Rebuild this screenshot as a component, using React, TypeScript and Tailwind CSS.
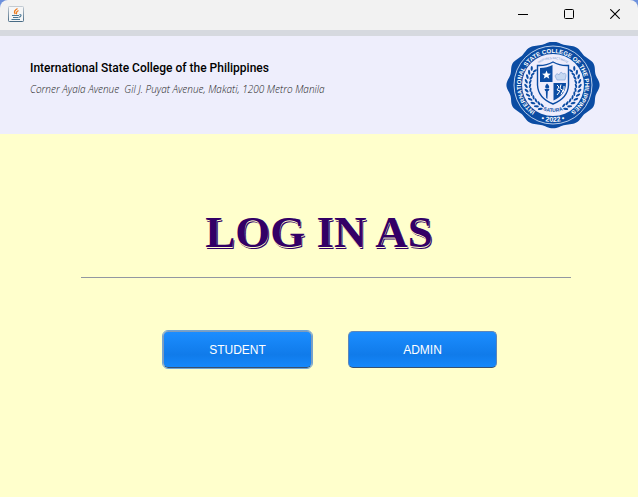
import React from "react";

const CX = 47;
const CY = 43;

function scallop(): string {
  const points: string[] = [];
  for (let i = 0; i < 360; i += 2) {
    const a = (i * Math.PI) / 180;
    const bump = (1 + Math.cos(12 * a)) / 2;
    const rx = 44 + 2.6 * bump;
    const ry = 41.5 + 1.8 * bump;
    points.push(`${(CX + rx * Math.cos(a)).toFixed(2)},${(CY + ry * Math.sin(a)).toFixed(2)}`);
  }
  return points.join(" ");
}

const leaves = Array.from({ length: 11 }, (_, i) => 118 + i * 10);

function Laurel() {
  return (
    <g fill="#0b4ca3">
      {leaves.map((deg) => (
        <g key={deg} transform={`rotate(${deg} ${CX} ${CY})`}>
          <ellipse cx={CX + 27} cy={CY} rx="2.5" ry="1.1" transform={`rotate(55 ${CX + 27} ${CY})`} />
          <ellipse cx={CX + 23} cy={CY} rx="2.3" ry="1" transform={`rotate(110 ${CX + 23} ${CY})`} />
        </g>
      ))}
    </g>
  );
}

function Seal() {
  return (
    <svg
      className="h-[88px] w-[94px] shrink-0"
      viewBox="0 0 94 88"
      role="img"
      aria-label="College seal"
      style={{ fontFamily: '"Liberation Sans", Arial, sans-serif' }}
    >
      <defs>
        <path id="ring" d="M47 75 A32 32 0 1 1 47.01 75" />
        <path id="year" d="M10 43 A37 37 0 0 0 84 43" />
        <path id="innerTop" d="M21 43 A26 26 0 0 1 73 43" />
        <path id="innerBottom" d="M20 43 A27 27 0 0 0 74 43" />
      </defs>
      <polygon points={scallop()} fill="#0b4ca3" />
      <circle cx={CX} cy={CY} r="39" fill="none" stroke="#e4edfb" strokeWidth="0.8" />
      <circle cx={CX} cy={CY} r="31" fill="#eeedfc" />
      <text fill="#ffffff" fontSize="6" fontWeight="700">
        <textPath href="#ring" startOffset="50%" textAnchor="middle">
          INTERNATIONAL STATE COLLEGE OF THE PHILIPPINES
        </textPath>
      </text>
      <text fill="#ffffff" fontSize="7" fontWeight="700">
        <textPath href="#year" startOffset="50%" textAnchor="middle">
          • 2022 •
        </textPath>
      </text>
      <text fill="#6f93ca" fontSize="3">
        <textPath href="#innerTop" startOffset="50%" textAnchor="middle">
          INSPIRES FACTMATE
        </textPath>
      </text>
      <text fill="#0b4ca3" fontSize="5" fontWeight="700">
        <textPath href="#innerBottom" startOffset="50%" textAnchor="middle">
          SATURA
        </textPath>
      </text>
      <Laurel />
      <g transform="translate(94 0) scale(-1 1)">
        <Laurel />
      </g>
      <path d="M47 20 Q40 24 31.500 23.500 V43 Q32 56 47 62 Q62 56 62.500 43 V23.500 Q54 24 47 20Z" fill="#eeedfc" stroke="#0b4ca3" strokeWidth="1.400" />
      <path d="M46.500 23 Q41 26 34 26 V40 H46.500Z" fill="#0b4ca3" />
      <path d="M47.500 41 H60 Q60 53 47.500 58.500Z" fill="#0b4ca3" />
      <path d="M40.500 28.500 l1.200 3 3.200 .2 -2.500 2 .9 3.100 -2.800 -1.700 -2.800 1.700 .9 -3.100 -2.500 -2 3.200 -.2Z" fill="#ffffff" />
      <path d="M49 34 q2 -4 4 -1 q2 -5 4 -1 q3 -2 3 2 l-1 4 h-8Z" fill="#c6d7f1" stroke="#7da0d5" strokeWidth="0.600" />
      <path d="M41 41.500 q-3 3 -1 5 h2.500 q2 -2 -1.500 -5Z M38.500 47 h5 l-1 2 h-.7 l-.4 8 -1.200 -1 -.4 -7 h-.6Z" fill="#0b4ca3" />
      <path d="M51 43 l2 2 -2 3 3 1 -3 4 M55 42.500 l-1 4 3 2 -2 4 M58 44 v3 l-1 3" fill="none" stroke="#ffffff" strokeWidth="1" />
    </svg>
  );
}

function JavaIcon() {
  return (
    <svg className="size-4" viewBox="0 0 16 16" aria-hidden="true">
      <defs>
        <linearGradient id="cup" x1="0" y1="0" x2="0" y2="1">
          <stop offset="0" stopColor="#c3cbd3" />
          <stop offset="1" stopColor="#486b85" />
        </linearGradient>
      </defs>
      <rect x="0.500" y="0.500" width="15" height="15" rx="0.800" fill="#f5f6f7" stroke="url(#cup)" />
      <path d="M9.500 2.500 Q5 5 7.200 8 M10.500 4.500 Q7.500 6 8.700 8.300" fill="none" stroke="#ee7b1d" strokeWidth="1.300" />
      <path d="M4 9.500 H11 M5 11.500 H10.500 M3.500 13.500 H12 M11.500 8.500 q2.500 0 1 2 l-1.500 .8" fill="none" stroke="#4b7895" strokeWidth="1.100" />
    </svg>
  );
}

const caption = "flex h-7 w-[46px] items-center justify-center text-black";

function TitleBar() {
  return (
    <div className="bg-[#6d91dc]">
      <div className="flex h-[30px] items-start justify-between rounded-t-lg bg-[#f2f2f2] pl-2">
        <div className="pt-1.5">
          <JavaIcon />
        </div>
        <div className="flex">
          <button type="button" aria-label="Minimize" className={caption}>
            <svg width="10" height="11" viewBox="0 0 10 11" stroke="currentColor" shapeRendering="crispEdges">
              <path d="M0 5.500H10" />
            </svg>
          </button>
          <button type="button" aria-label="Maximize" className={caption}>
            <svg width="10" height="10" viewBox="0 0 10 10" fill="none" stroke="currentColor">
              <rect x="0.500" y="0.500" width="9" height="9" rx="1" />
            </svg>
          </button>
          <button type="button" aria-label="Close" className={caption}>
            <svg width="10" height="10" viewBox="0 0 10 10" stroke="currentColor" strokeWidth="1.100">
              <path d="M0.300 0.300L9.700 9.700M9.700 0.300L0.300 9.700" />
            </svg>
          </button>
        </div>
      </div>
    </div>
  );
}

const choice =
  "h-[37px] w-[149px] rounded-[5px] border bg-linear-to-b from-[#1b8dff] via-[#107bea] via-65% to-[#1588fb] text-xs text-white font-['Liberation_Sans',Arial,sans-serif]";

export default function App() {
  return (
    <div className="flex min-h-screen flex-col bg-[#ffffcc]">
      <TitleBar />
      <header className="flex h-[104px] items-start justify-between border-t-6 border-[#d6d9df] bg-[#eeeefc] pt-1.5 pr-[38px] pl-[30px]">
        <div className="pt-[17px]">
          <p className="text-xs leading-[18px] font-medium text-black font-['Roboto','Noto_Sans',sans-serif]">
            International State College of the Philippines
          </p>
          <p className="mt-1 text-[10px] leading-4 font-light whitespace-pre text-[#222222] italic font-['Open_Sans','Noto_Sans',sans-serif]">
            {"Corner Ayala Avenue  Gil J. Puyat Avenue, Makati, 1200 Metro Manila"}
          </p>
        </div>
        <Seal />
      </header>
      <main className="flex flex-col pt-[72px]">
        <h1 className="text-center font-['Liberation_Serif',serif] text-[45px] leading-[52px] font-bold text-[#330066] [text-shadow:0_1px_0_#ffffcc,1px_2px_0_#330066]">
          LOG IN AS
        </h1>
        <hr className="mt-[19px] mr-[67px] ml-[81px] border-[#9297a1]" />
        <div className="mt-[53px] flex justify-center gap-9 pl-[22px]">
          <button type="button" className={`${choice} border-[#7d9bbd] border-b-[#37506f] outline-1 outline-[#73a4d1]`}>
            STUDENT
          </button>
          <button type="button" className={`${choice} border-[#5d86ba] border-b-[#37506f]`}>
            ADMIN
          </button>
        </div>
      </main>
    </div>
  );
}
